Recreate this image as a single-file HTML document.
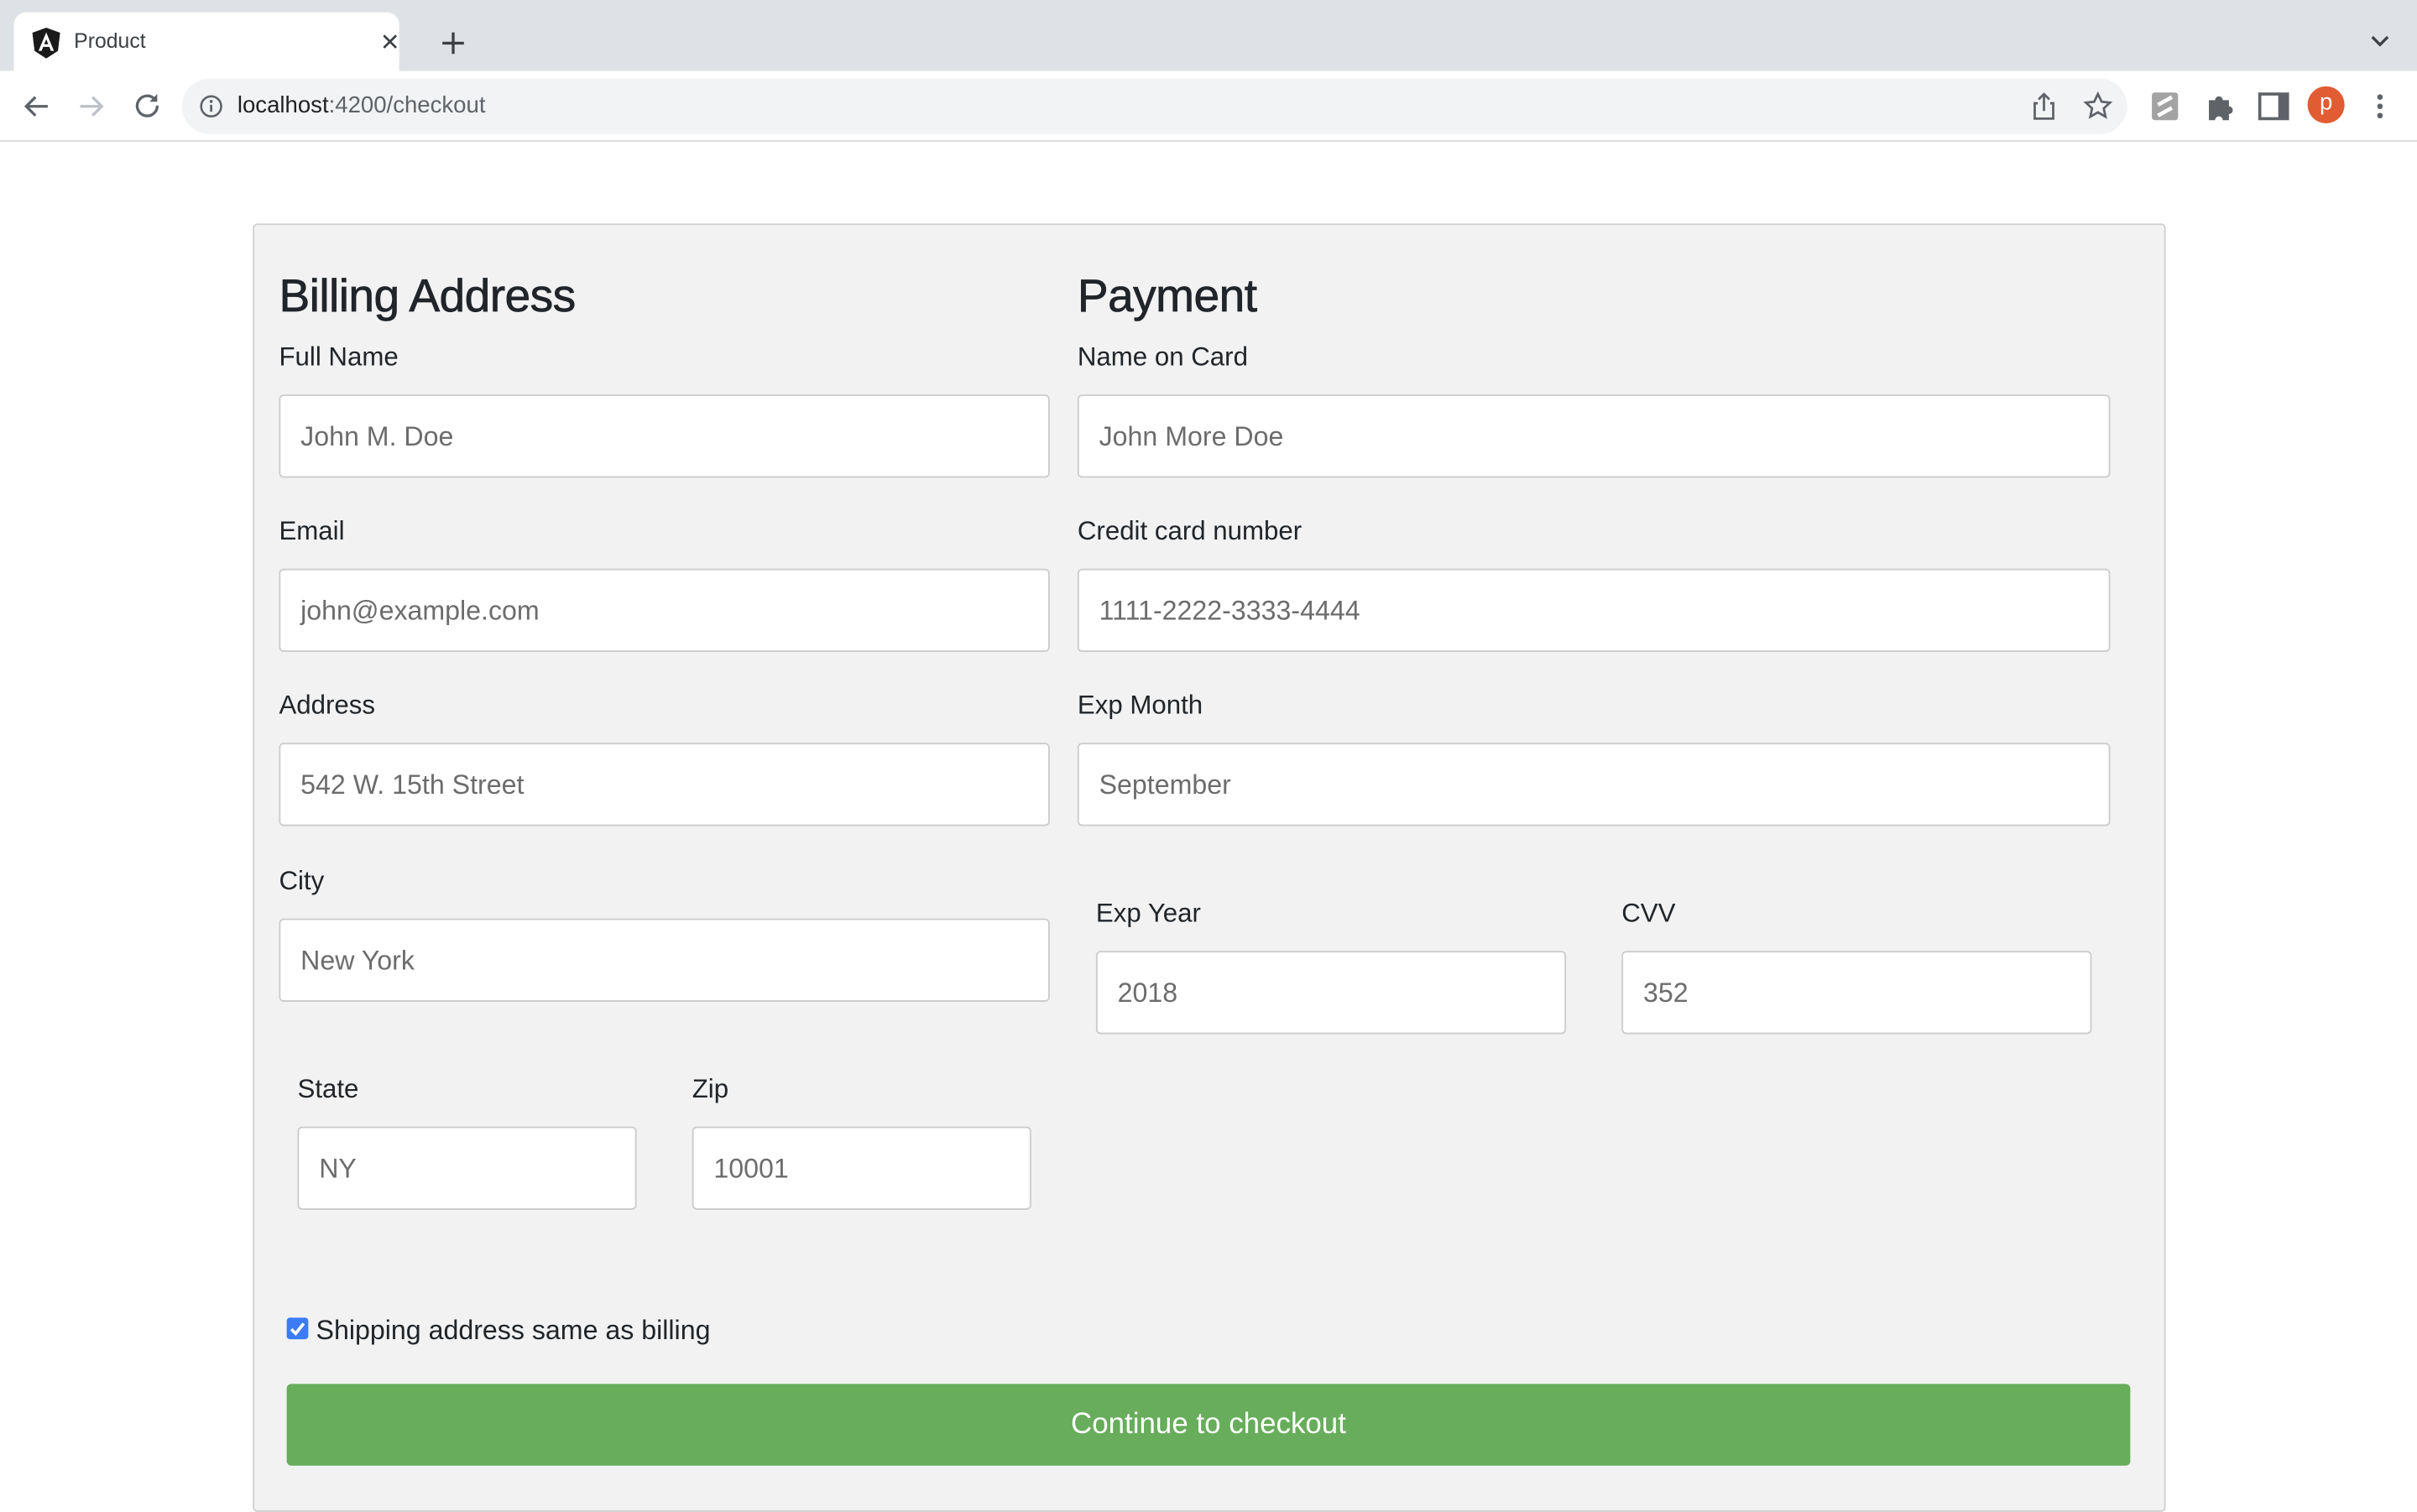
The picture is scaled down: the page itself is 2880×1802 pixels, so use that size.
<!DOCTYPE html>
<html><head><meta charset="utf-8"><style>
html,body{margin:0;padding:0;width:2880px;height:1800px;overflow:hidden;background:#fff;}
#w{position:absolute;left:0;top:0;width:1568px;height:980px;transform:scale(1.836735);transform-origin:0 0;font-family:"Liberation Sans",Arial,sans-serif;}
.a{position:absolute;}
.lbl{position:absolute;font-size:17px;color:#212529;line-height:20px;}
.in{position:absolute;box-sizing:border-box;background:#fff;border:1px solid #ccc;border-radius:3px;height:54px;font-size:17.5px;color:#6c6c6c;padding-left:13px;line-height:52px;}
h{position:absolute;font-size:30px;color:#212529;line-height:36px;font-weight:500;letter-spacing:-0.3px;-webkit-text-stroke:0.4px #212529;}
</style></head><body><div id="w">
<div class="a" style="left:0;top:0;width:1568px;height:46px;background:#dee1e6"></div>
<div class="a" style="left:9px;top:8px;width:250px;height:38px;background:#fff;border-radius:8px 8px 0 0"></div>
<svg class="a" style="left:21px;top:18px" width="18" height="20" viewBox="0 0 18 20"><path d="M9 0L0 3.2l1.4 11.8L9 20l7.6-5L18 3.2z" fill="#1a1a1a"/><path d="M9 3L4 15h2l1-2.6h4l1 2.6h2zM7.7 10.7L9 7.3l1.3 3.4z" fill="#fff"/></svg>
<div class="a" style="left:48px;top:19px;font-size:13.5px;color:#3c4043">Product</div>
<svg class="a" style="left:247px;top:21px" width="12" height="12"><path d="M2 2l8 8M10 2l-8 8" stroke="#3c4043" stroke-width="1.5"/></svg>
<svg class="a" style="left:286px;top:20px" width="16" height="16"><path d="M8 1v14M1 8h14" stroke="#3c4043" stroke-width="1.8"/></svg>
<svg class="a" style="left:1537px;top:22px" width="14" height="10"><path d="M2 2l5 5 5-5" stroke="#3c4043" stroke-width="1.8" fill="none"/></svg>
<div class="a" style="left:0;top:91px;width:1568px;height:1px;background:#dadce0"></div>
<svg class="a" style="left:14px;top:60px" width="110" height="18"><path d="M17 9H3M9 3L3 9l6 6" stroke="#5f6368" stroke-width="1.8" fill="none"/><path d="M38 9h14M46 3l6 6-6 6" stroke="#bdc1c6" stroke-width="1.8" fill="none"/><path d="M86 4a6.5 6.5 0 1 0 2 4.5" stroke="#5f6368" stroke-width="1.8" fill="none"/><path d="M88 1v5h-5z" fill="#5f6368"/></svg>
<div class="a" style="left:118px;top:51px;width:1262px;height:36px;background:#f1f3f4;border-radius:18px"></div>
<svg class="a" style="left:129px;top:61px" width="16" height="16"><circle cx="8" cy="8" r="6.5" stroke="#5f6368" stroke-width="1.4" fill="none"/><path d="M8 7v4.5" stroke="#5f6368" stroke-width="1.5"/><circle cx="8" cy="4.8" r="1" fill="#5f6368"/></svg>
<div class="a" style="left:154px;top:60px;font-size:15px;color:#202124">localhost<span style="color:#5f6368">:4200/checkout</span></div>
<svg class="a" style="left:1317px;top:59px" width="54" height="20"><path d="M5 8H3v10h12V8h-2M9 13V2M5.5 5.5L9 2l3.5 3.5" stroke="#5f6368" stroke-width="1.5" fill="none"/><path d="M44 2l2.4 5 5.4.6-4 3.7 1.1 5.4-4.9-2.8-4.9 2.8 1.1-5.4-4-3.7 5.4-.6z" stroke="#5f6368" stroke-width="1.5" fill="none"/></svg>
<div class="a" style="left:1396px;top:60px;width:17px;height:18px;background:#a3a3a3;border-radius:2px"></div>
<svg class="a" style="left:1396px;top:60px" width="17" height="18"><path d="M4 8l9-5M4 15l9-5" stroke="#fff" stroke-width="2.5"/></svg>
<svg class="a" style="left:1430px;top:59px" width="20" height="20"><path d="M3 6h4a2.5 2.5 0 1 1 5 0h4v4a2.5 2.5 0 1 1 0 5v4H12a2.5 2.5 0 1 0-5 0H3z" fill="#5f6368"/></svg>
<div class="a" style="left:1465px;top:60px;width:11px;height:14px;border:2.5px solid #5f6368;border-right-width:7px;"></div>
<div class="a" style="left:1497px;top:56px;width:24px;height:24px;border-radius:50%;background:#e25c33;color:#fff;font-size:15px;text-align:center;line-height:22px">p</div>
<svg class="a" style="left:1540px;top:60px" width="8" height="18"><circle cx="4" cy="3" r="1.8" fill="#5f6368"/><circle cx="4" cy="9" r="1.8" fill="#5f6368"/><circle cx="4" cy="15" r="1.8" fill="#5f6368"/></svg>

<div class="a" style="left:164px;top:145px;width:1239px;height:834px;background:#f2f2f2;border:1px solid #d0d0d0;border-radius:3px"></div>
<h style="left:181px;top:175px">Billing Address</h>
<h style="left:699px;top:175px">Payment</h>

<div class="lbl" style="left:181px;top:222px">Full Name</div>
<div class="in" style="left:181px;top:256px;width:500px">John M. Doe</div>
<div class="lbl" style="left:181px;top:335px">Email</div>
<div class="in" style="left:181px;top:369px;width:500px">john@example.com</div>
<div class="lbl" style="left:181px;top:448px">Address</div>
<div class="in" style="left:181px;top:482px;width:500px">542 W. 15th Street</div>
<div class="lbl" style="left:181px;top:562px">City</div>
<div class="in" style="left:181px;top:596px;width:500px">New York</div>
<div class="lbl" style="left:193px;top:697px">State</div>
<div class="in" style="left:193px;top:731px;width:220px">NY</div>
<div class="lbl" style="left:449px;top:697px">Zip</div>
<div class="in" style="left:449px;top:731px;width:220px">10001</div>

<div class="lbl" style="left:699px;top:222px">Name on Card</div>
<div class="in" style="left:699px;top:256px;width:670px">John More Doe</div>
<div class="lbl" style="left:699px;top:335px">Credit card number</div>
<div class="in" style="left:699px;top:369px;width:670px">1111-2222-3333-4444</div>
<div class="lbl" style="left:699px;top:448px">Exp Month</div>
<div class="in" style="left:699px;top:482px;width:670px">September</div>
<div class="lbl" style="left:711px;top:583px">Exp Year</div>
<div class="in" style="left:711px;top:617px;width:305px">2018</div>
<div class="lbl" style="left:1052px;top:583px">CVV</div>
<div class="in" style="left:1052px;top:617px;width:305px">352</div>

<div class="a" style="left:186px;top:855px;width:14px;height:14px;background:#3b7cf5;border-radius:2px"></div>
<svg class="a" style="left:186px;top:855px" width="14" height="14"><path d="M3 7.5l2.8 2.8L11 3.8" stroke="#fff" stroke-width="2" fill="none"/></svg>
<div class="lbl" style="left:205px;top:853px;font-size:17.5px">Shipping address same as billing</div>
<div class="a" style="left:186px;top:898px;width:1196px;height:53px;background:#67ad5b;border-radius:3px;color:#fff;font-size:19px;text-align:center;line-height:54px">Continue to checkout</div>
</div></body></html>
